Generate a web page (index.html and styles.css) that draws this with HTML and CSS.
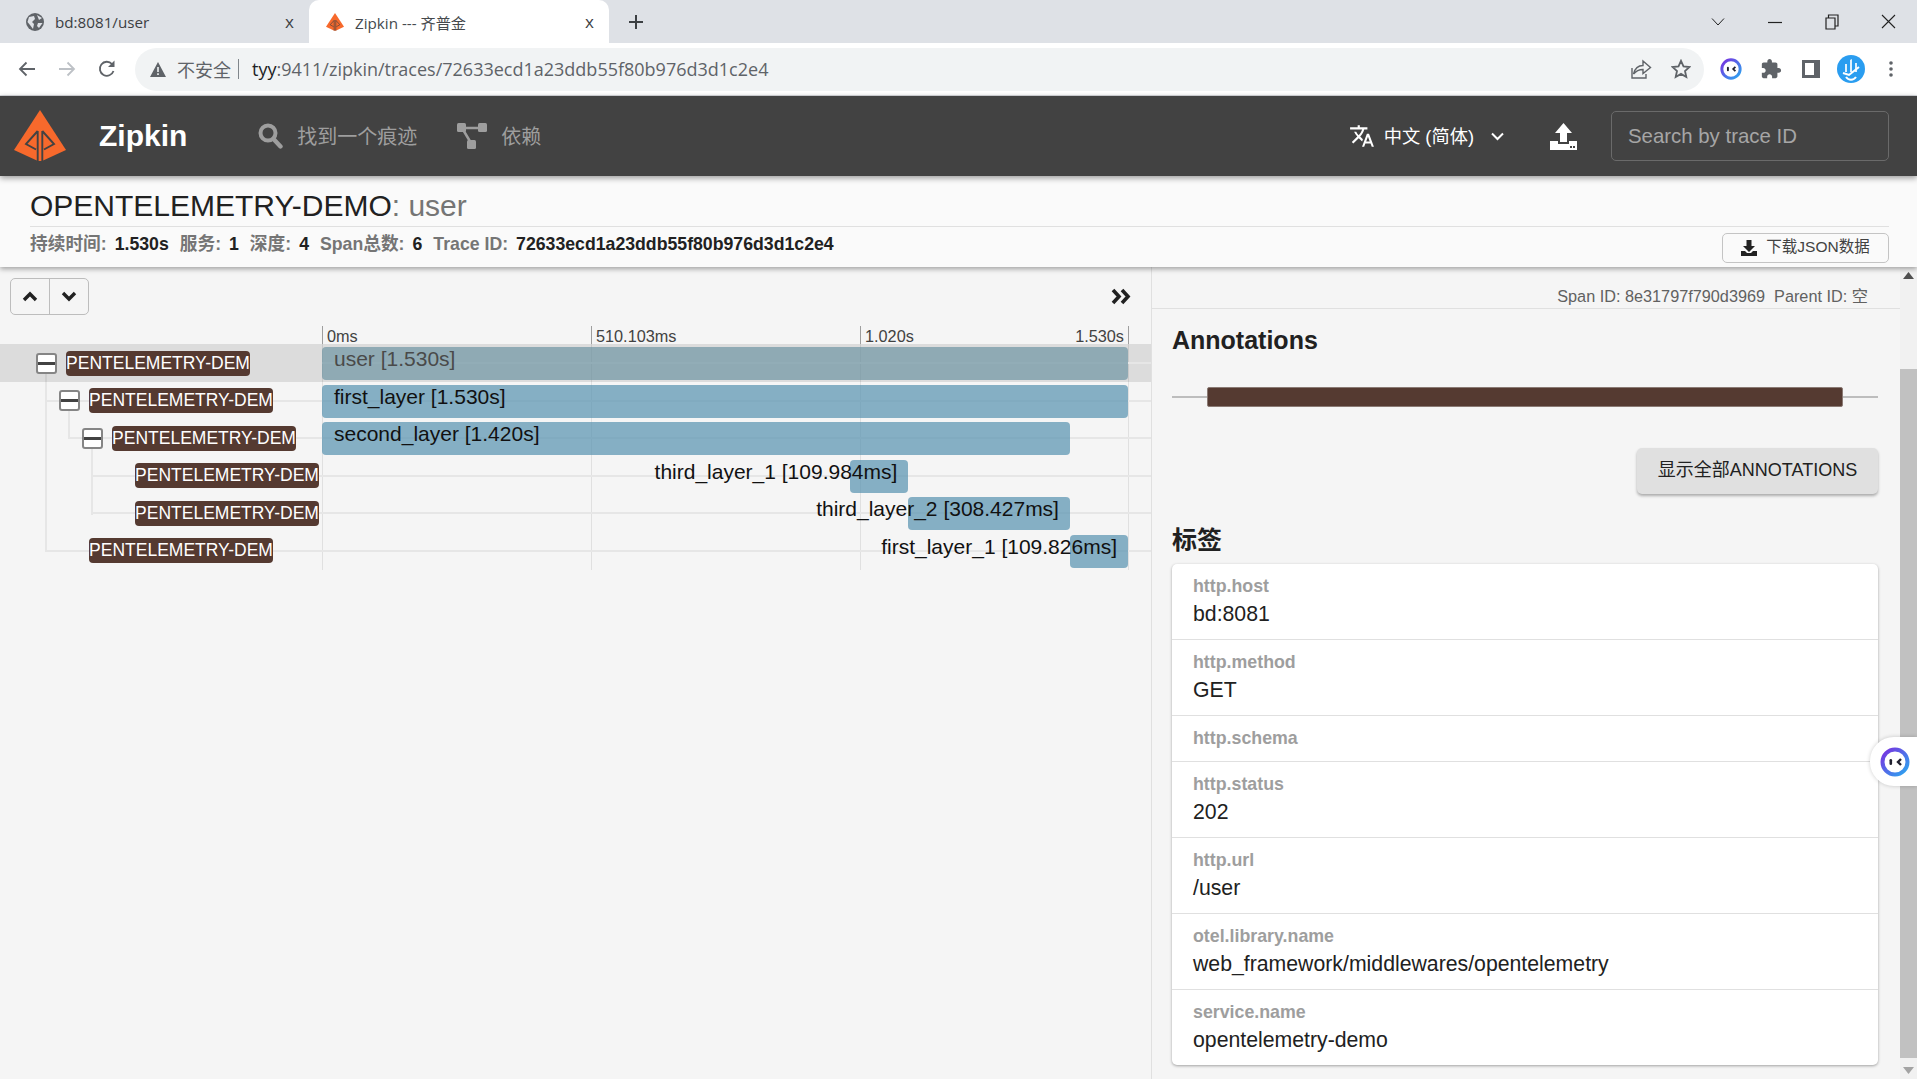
FILE: index.html
```html
<!DOCTYPE html>
<html lang="en">
<head>
    <meta charset="UTF-8">
    <title>Zipkin --- 齐普金</title>
    <link rel="stylesheet" href="styles.css">
</head>
<body>
<svg class="defs" aria-hidden="true">
    <symbol id="zipkinLogo" viewBox="0 0 52 52">
        <path d="M26 0 L52 40 L28 51 L24 51 L0 40 Z" fill="#f7692c"/>
        <path d="M23.7 21 L12 34 L22 39.5 M28.3 21 L40 34 L30 39.5 M23.7 21 V51 M28.3 21 V51" fill="none" stroke="#424242" stroke-width="1.9"/>
    </symbol>
    <symbol id="eyeBadge" viewBox="0 0 30 30">
        <defs>
            <linearGradient id="ringColor" x1="0" y1="0" x2="1" y2="1">
                <stop offset="0" stop-color="#7a2fe0"/>
                <stop offset="1" stop-color="#2aa8f0"/>
            </linearGradient>
        </defs>
        <circle cx="15" cy="15" r="12.5" fill="#fff" stroke="url(#ringColor)" stroke-width="4"/>
        <rect x="9.5" y="12" width="2.6" height="6" rx="1.3" fill="#1f1f2e"/>
        <path d="M21 12 L18 15 L21 18" fill="none" stroke="#1f1f2e" stroke-width="2.4"/>
    </symbol>
</svg>

<div class="tabstrip">
    <div class="tab">
        <svg class="favicon" viewBox="0 0 18 18">
            <circle cx="9" cy="9" r="9" fill="#5f6368"/>
            <path d="M3 4 L8 3 L9 6 L6 9 L8 11 L7 16 L4 12 L1.5 9 Z M11 2 L16 5 L13 7 Z M12 10 L16.5 10 L13 15 L11 13 Z" fill="#dee1e6"/>
        </svg>
        <span class="tab-title">bd:8081/user</span>
        <span class="tab-close">x</span>
    </div>
    <div class="tab active">
        <svg class="favicon"><use href="#zipkinLogo"/></svg>
        <span class="tab-title">Zipkin --- 齐普金</span>
        <span class="tab-close">x</span>
    </div>
    <svg class="new-tab" viewBox="0 0 16 16"><path d="M8 1 V15 M1 8 H15" stroke="#3c4043" stroke-width="2"/></svg>
    <div class="spacer"></div>
    <div class="win-btn"><svg width="14" height="10" viewBox="0 0 14 10"><path d="M1 1.5 L7 8 L13 1.5" fill="none" stroke="#222" stroke-width="1"/></svg></div>
    <div class="win-btn"><svg width="14" height="14" viewBox="0 0 14 14"><path d="M0 7.5 H14" stroke="#222" stroke-width="1.2"/></svg></div>
    <div class="win-btn"><svg width="14" height="16" viewBox="0 0 14 16"><path d="M1 4 H10 V15 H1 Z M3.5 4 V1 H13 V12 H10" fill="none" stroke="#222" stroke-width="1.2"/></svg></div>
    <div class="win-btn"><svg width="15" height="15" viewBox="0 0 15 15"><path d="M1 1 L14 14 M14 1 L1 14" stroke="#222" stroke-width="1.1"/></svg></div>
</div>

<div class="toolbar">
    <div class="tool-btn"><svg width="20" height="20" viewBox="0 0 20 20"><path d="M18 10 H3 M9.5 3.5 L3 10 L9.5 16.5" fill="none" stroke="#5f6368" stroke-width="1.8"/></svg></div>
    <div class="tool-btn"><svg width="20" height="20" viewBox="0 0 20 20"><path d="M2 10 H17 M10.5 3.5 L17 10 L10.5 16.5" fill="none" stroke="#bdc1c6" stroke-width="1.8"/></svg></div>
    <div class="tool-btn"><svg width="20" height="20" viewBox="0 0 20 20"><path d="M16.5 12 A7 7 0 1 1 15 5" fill="none" stroke="#5f6368" stroke-width="1.8"/><path d="M17.5 1.5 V8 H11 Z" fill="#5f6368"/></svg></div>
    <div class="omnibox">
        <svg class="warn" width="16" height="15" viewBox="0 0 16 15"><path d="M8 0 L16 15 H0 Z" fill="#5f6368"/><path d="M8 5 V10 M8 11.2 V13" stroke="#f1f3f4" stroke-width="1.6"/></svg>
        <span class="insecure">不安全</span>
        <span class="omni-sep"></span>
        <span class="url"><span class="url-host">tyy</span>:9411/zipkin/traces/72633ecd1a23ddb55f80b976d3d1c2e4</span>
        <div class="spacer"></div>
        <div class="tool-btn"><svg width="22" height="22" viewBox="0 0 22 22"><path d="M2 10 V20 H16 V16 M3.5 16 C5 10 9 7.5 13 7.5 V3 L20.5 9.5 L13 15.5 V11.5 C9 11.5 6 13 3.5 16 Z" fill="none" stroke="#5f6368" stroke-width="1.4"/></svg></div>
        <div class="tool-btn"><svg width="20" height="20" viewBox="0 0 20 20"><path d="M10 1.8 L12.5 7.4 L18.5 8 L14 12 L15.3 18 L10 14.9 L4.7 18 L6 12 L1.5 8 L7.5 7.4 Z" fill="none" stroke="#5f6368" stroke-width="1.8"/></svg></div>
    </div>
    <div class="tool-btn"><svg width="22" height="22"><use href="#eyeBadge"/></svg></div>
    <div class="tool-btn"><svg width="22" height="22" viewBox="0 0 24 24"><path fill="#5f6368" d="M20.5 11H19V7c0-1.1-.9-2-2-2h-4V3.5C13 2.12 11.88 1 10.5 1S8 2.12 8 3.5V5H4c-1.1 0-1.99.9-1.99 2v3.8H3.5c1.49 0 2.7 1.21 2.7 2.7s-1.21 2.7-2.7 2.7H2V20c0 1.1.9 2 2 2h3.8v-1.5c0-1.49 1.21-2.7 2.7-2.7 1.49 0 2.7 1.21 2.7 2.7V22H17c1.1 0 2-.9 2-2v-4h1.5c1.38 0 2.5-1.12 2.5-2.5S21.88 11 20.5 11z"/></svg></div>
    <div class="tool-btn"><svg width="18" height="18" viewBox="0 0 18 18"><path d="M0 0 H18 V18 H0 Z" fill="#5f6368"/><rect x="3" y="3" width="9" height="12" fill="#fff"/></svg></div>
    <div class="tool-btn"><svg width="28" height="28" viewBox="0 0 28 28"><circle cx="14" cy="14" r="14" fill="#2a9df0"/><path d="M8 9 L10 9 L10 17 L8 17 Z M13 5 L15 4 L15 17 L13 17 Z M18 8 L20 8 L20 17 L18 17 Z" fill="#fff" opacity=".85"/><path d="M6 18 L12 20 L22 12 M9 22 A6 6 0 0 0 19 22" fill="none" stroke="#fff" stroke-width="2"/></svg></div>
    <div class="tool-btn"><svg width="4" height="16" viewBox="0 0 4 16"><circle cx="2" cy="2" r="1.8" fill="#5f6368"/><circle cx="2" cy="8" r="1.8" fill="#5f6368"/><circle cx="2" cy="14" r="1.8" fill="#5f6368"/></svg></div>
</div>

<div class="app-header">
    <svg class="logo"><use href="#zipkinLogo"/></svg>
    <div class="brand">Zipkin</div>
    <div class="nav-item find">
        <svg width="25" height="26" viewBox="0 0 25 26"><circle cx="10" cy="10" r="7.5" fill="none" stroke="#9e9e9e" stroke-width="4"/><path d="M15.5 16 L22.5 23.5" stroke="#9e9e9e" stroke-width="4.4" stroke-linecap="round"/></svg>
        <span>找到一个痕迹</span>
    </div>
    <div class="nav-item deps">
        <svg width="30" height="26" viewBox="0 0 30 26"><rect x="0" y="0" width="9" height="9" rx="1.5" fill="#9e9e9e"/><rect x="21" y="0" width="9" height="9" rx="1.5" fill="#9e9e9e"/><rect x="10" y="17" width="9" height="9" rx="1.5" fill="#9e9e9e"/><path d="M5 5 H25 M5 5 L14 20" stroke="#9e9e9e" stroke-width="2.5"/></svg>
        <span>依赖</span>
    </div>
    <div class="spacer"></div>
    <div class="lang">
        <svg width="26" height="26" viewBox="0 0 24 24"><path fill="#fff" d="M12.87 15.07l-2.54-2.51.03-.03c1.74-1.94 2.98-4.17 3.71-6.53H17V4h-7V2H8v2H1v1.99h11.17C11.5 7.92 10.44 9.75 9 11.35 8.07 10.32 7.3 9.19 6.69 8h-2c.73 1.63 1.73 3.17 2.98 4.56l-5.09 5.02L4 19l5-5 3.11 3.11.76-2.04zM18.5 10h-2L12 22h2l1.12-3h4.75L21 22h2l-4.5-12zm-2.62 7l1.62-4.33L19.12 17h-3.24z"/></svg>
        <span>中文 (简体)</span>
        <svg width="13" height="9" viewBox="0 0 13 9"><path d="M1 1.5 L6.5 7 L12 1.5" fill="none" stroke="#fff" stroke-width="2"/></svg>
    </div>
    <svg class="upload" width="27" height="27" viewBox="0 0 27 27"><path d="M13.5 0 L22 10 H17 V19 H10 V10 H5 Z" fill="#fff"/><path d="M0 18 H8 V21 H19 V18 H27 V27 H0 Z" fill="#fff"/><rect x="20" y="23" width="2" height="2" fill="#424242"/><rect x="23" y="23" width="2" height="2" fill="#424242"/></svg>
    <div class="trace-search">Search by trace ID</div>
</div>

<div class="trace-head">
    <div class="trace-title">OPENTELEMETRY-DEMO<span class="trace-title-span">: user</span></div>
    <div class="trace-meta">
        <div class="meta-items">
            <span class="meta-label">持续时间:</span><span class="meta-value">1.530s</span>
            <span class="meta-label">服务:</span><span class="meta-value">1</span>
            <span class="meta-label">深度:</span><span class="meta-value">4</span>
            <span class="meta-label">Span总数:</span><span class="meta-value">6</span>
            <span class="meta-label">Trace ID:</span><span class="meta-value">72633ecd1a23ddb55f80b976d3d1c2e4</span>
        </div>
        <div class="json-btn">
            <svg width="16" height="16" viewBox="0 0 16 16"><path d="M5.5 0 H10.5 V6 H14 L8 12 L2 6 H5.5 Z" fill="#222"/><path d="M0 11 H4 L6 13 H10 L12 11 H16 V16 H0 Z" fill="#222"/></svg>
            <span>下载JSON数据</span>
        </div>
    </div>
</div>

<div class="main">
    <div class="trace-panel">
        <div class="panel-top">
            <div class="btn-group">
                <div class="group-btn"><svg width="16" height="11" viewBox="0 0 16 11"><path d="M2 9 L8 3 L14 9" fill="none" stroke="#212121" stroke-width="3.4"/></svg></div>
                <div class="group-btn"><svg width="16" height="11" viewBox="0 0 16 11"><path d="M2 2 L8 8 L14 2" fill="none" stroke="#212121" stroke-width="3.4"/></svg></div>
            </div>
            <svg class="collapse" width="20" height="17" viewBox="0 0 20 17"><path d="M2 2 L8 8.5 L2 15 M11 2 L17 8.5 L11 15" fill="none" stroke="#212121" stroke-width="3.6"/></svg>
        </div>
        <div class="ruler">
            <div class="tick">0ms</div>
            <div class="tick">510.103ms</div>
            <div class="tick tick-last"><span>1.020s</span><span>1.530s</span></div>
        </div>
        <div class="rows">
            <div class="grid"><div></div><div></div><div class="grid-last"></div></div>
            <span class="tree-v tree-a"></span>
            <span class="tree-v tree-b"></span>
            <span class="tree-v tree-c"></span>

            <div class="row selected">
                <div class="tree-cell lv0"><span class="toggle"></span><span class="service"><span>OPENTELEMETRY-DEMO</span></span></div>
                <div class="timeline"><div class="bar" style="left: 0; width: 100%">user [1.530s]</div></div>
            </div>
            <div class="row line-a">
                <div class="tree-cell lv1"><span class="toggle"></span><span class="service"><span>OPENTELEMETRY-DEMO</span></span></div>
                <div class="timeline"><div class="bar" style="left: 0; width: 100%">first_layer [1.530s]</div></div>
            </div>
            <div class="row line-b">
                <div class="tree-cell lv2"><span class="toggle"></span><span class="service"><span>OPENTELEMETRY-DEMO</span></span></div>
                <div class="timeline"><div class="bar" style="left: 0; width: 92.8%">second_layer [1.420s]</div></div>
            </div>
            <div class="row line-c">
                <div class="tree-cell lv3"><span class="toggle hidden"></span><span class="service"><span>OPENTELEMETRY-DEMO</span></span></div>
                <div class="timeline"><div class="bar short" style="left: 65.55%; width: 7.2%">third_layer_1 [109.984ms]</div></div>
            </div>
            <div class="row line-c">
                <div class="tree-cell lv3"><span class="toggle hidden"></span><span class="service"><span>OPENTELEMETRY-DEMO</span></span></div>
                <div class="timeline"><div class="bar short" style="left: 72.7%; width: 20.1%">third_layer_2 [308.427ms]</div></div>
            </div>
            <div class="row line-a">
                <div class="tree-cell lv1"><span class="toggle hidden"></span><span class="service"><span>OPENTELEMETRY-DEMO</span></span></div>
                <div class="timeline"><div class="bar short" style="left: 92.8%; width: 7.2%">first_layer_1 [109.826ms]</div></div>
            </div>
        </div>
    </div>

    <div class="span-panel">
        <div class="span-ids">Span ID: 8e31797f790d3969&nbsp;&nbsp;Parent ID: 空</div>
        <div class="span-body">
            <div class="section-title">Annotations</div>
            <div class="anno-track"><div class="anno-bar"></div></div>
            <div class="anno-actions"><div class="anno-btn"><span>显示全部ANNOTATIONS</span></div></div>
            <div class="section-title tags-title">标签</div>
            <div class="tag-card">
                <div class="tag"><div class="tag-key">http.host</div><div class="tag-value">bd:8081</div></div>
                <div class="tag"><div class="tag-key">http.method</div><div class="tag-value">GET</div></div>
                <div class="tag"><div class="tag-key">http.schema</div></div>
                <div class="tag"><div class="tag-key">http.status</div><div class="tag-value">202</div></div>
                <div class="tag"><div class="tag-key">http.url</div><div class="tag-value">/user</div></div>
                <div class="tag"><div class="tag-key">otel.library.name</div><div class="tag-value">web_framework/middlewares/opentelemetry</div></div>
                <div class="tag"><div class="tag-key">service.name</div><div class="tag-value">opentelemetry-demo</div></div>
            </div>
        </div>
    </div>

    <div class="scrollbar">
        <div class="scroll-arrow"><svg width="11" height="7" viewBox="0 0 11 7"><path d="M5.5 0 L11 7 H0 Z" fill="#505050"/></svg></div>
        <div class="scroll-gap"></div>
        <div class="scroll-thumb"></div>
        <div class="spacer"></div>
        <div class="scroll-arrow"><svg width="11" height="7" viewBox="0 0 11 7"><path d="M0 0 H11 L5.5 7 Z" fill="#a3a3a3"/></svg></div>
    </div>
</div>

<div class="float-widget"><svg width="30" height="30"><use href="#eyeBadge"/></svg></div>
</body>
</html>
```

FILE: styles.css
```css
* {
    box-sizing: border-box;
}

html, body {
    margin: 0;
    width: 1917px;
    height: 1079px;
    overflow: hidden;
}

body {
    display: flex;
    flex-direction: column;
    background-color: #f5f5f5;
    color: #212121;
    font-family: "Liberation Sans", "Noto Sans CJK SC", sans-serif;
}

.defs {
    width: 0;
    height: 0;
    display: block;
}

.spacer {
    flex: 1;
}

/* browser chrome */
.tabstrip {
    height: 43px;
    flex: none;
    display: flex;
    align-items: center;
    padding-left: 9px;
    background-color: #dee1e6;
}

.tab {
    width: 300px;
    height: 43px;
    display: flex;
    align-items: center;
    padding: 0 15px 0 17px;
    color: #3c4043;
    font-family: "Open Sans", "Noto Sans CJK SC", sans-serif;
    font-size: 15.2px;
}

.tab.active {
    background-color: #fff;
    border-radius: 10px 10px 0 0;
    color: #45494d;
}

.favicon {
    width: 18px;
    height: 18px;
    margin-right: 11px;
    flex: none;
}

.tab-title {
    flex: 1;
    white-space: nowrap;
}

.tab-close {
    font-size: 17px;
    color: #3c4043;
}

.new-tab {
    width: 16px;
    height: 16px;
    margin-left: 19px;
}

.win-btn {
    width: 57px;
    height: 43px;
    display: flex;
    align-items: center;
    justify-content: center;
}

.toolbar {
    height: 53px;
    flex: none;
    display: flex;
    align-items: center;
    padding: 5px 6px 5px 7px;
    background-color: #fff;
    border-bottom: 1px solid #dadce0;
}

.tool-btn {
    width: 40px;
    height: 40px;
    flex: none;
    display: flex;
    align-items: center;
    justify-content: center;
}

.omnibox {
    flex: 1;
    height: 43px;
    margin: 0 7px 0 8px;
    padding: 0 3px 0 15px;
    display: flex;
    align-items: center;
    border-radius: 22px;
    background-color: #f1f3f4;
    font-family: "Open Sans", "Noto Sans CJK SC", sans-serif;
    color: #5f6368;
}

.insecure {
    margin-left: 11px;
    font-size: 18px;
}

.omni-sep {
    width: 1px;
    height: 20px;
    margin: 0 13px 0 7px;
    background-color: #80868b;
}

.url {
    font-size: 18px;
    white-space: nowrap;
}

.url-host {
    color: #202124;
}

/* zipkin header */
.app-header {
    height: 80px;
    flex: none;
    position: relative;
    z-index: 3;
    display: flex;
    align-items: center;
    padding: 0 28px 0 14px;
    background-color: #424242;
    box-shadow: 0 2px 6px rgba(0, 0, 0, .4);
}

.logo {
    width: 52px;
    height: 52px;
    flex: none;
}

.brand {
    margin-left: 33px;
    color: #fff;
    font-size: 30px;
    font-weight: bold;
}

.nav-item {
    display: flex;
    align-items: center;
    color: #9e9e9e;
    font-size: 20px;
}

.nav-item span {
    margin-left: 14px;
    padding-bottom: 2px;
}

.find {
    margin-left: 71px;
}

.deps {
    margin-left: 40px;
}

.lang {
    display: flex;
    align-items: center;
    color: #fff;
    font-size: 18.25px;
}

.lang span {
    margin: 0 17px 0 9px;
    padding-bottom: 2px;
}

.upload {
    margin-left: 46px;
}

.trace-search {
    width: 278px;
    height: 50px;
    margin-left: 34px;
    padding-left: 16px;
    display: flex;
    align-items: center;
    border: 1px solid #6a6a6a;
    border-radius: 5px;
    color: #a6a6a6;
    font-size: 20.4px;
}

/* trace title */
.trace-head {
    height: 91px;
    flex: none;
    position: relative;
    z-index: 2;
    padding: 0 28px 0 30px;
    background-color: #fafafa;
    box-shadow: 0 2px 5px rgba(0, 0, 0, .35);
}

.trace-title {
    height: 51px;
    padding-top: 12px;
    border-bottom: 1px solid #e0e0e0;
    font-size: 30px;
    line-height: 36px;
}

.trace-title-span {
    color: #757575;
}

.trace-meta {
    height: 40px;
    display: flex;
    align-items: center;
    justify-content: space-between;
}

.meta-items {
    display: flex;
    align-items: baseline;
    padding-bottom: 6px;
    font-size: 17.7px;
    line-height: 24px;
    font-weight: bold;
}

.meta-label {
    color: #757575;
}

.meta-value {
    margin: 0 11px 0 8px;
    color: #212121;
}

.json-btn {
    width: 167px;
    height: 30px;
    margin-top: 1px;
    display: flex;
    align-items: center;
    justify-content: center;
    gap: 9px;
    border: 1px solid #c4c4c4;
    border-radius: 5px;
    color: #424242;
    font-size: 15.5px;
}

.json-btn span {
    padding-bottom: 6px;
}

/* main split */
.main {
    flex: 1;
    display: flex;
    min-height: 0;
}

.trace-panel {
    width: 1152px;
    flex: none;
    border-right: 1px solid #e0e0e0;
}

.panel-top {
    height: 59px;
    padding: 0 20px 0 10px;
    display: flex;
    align-items: center;
    justify-content: space-between;
}

.btn-group {
    width: 79px;
    height: 37px;
    margin-top: -1px;
    display: flex;
    border: 1px solid #bdbdbd;
    border-radius: 5px;
}

.group-btn {
    flex: 1;
    display: flex;
    align-items: center;
    justify-content: center;
}

.group-btn + .group-btn {
    border-left: 1px solid #bdbdbd;
}

.ruler {
    height: 18px;
    margin-left: 322px;
    width: 807px;
    display: flex;
    color: #424242;
    font-size: 16.25px;
    line-height: 20px;
}

.tick {
    width: 269px;
    padding: 0 4px;
    border-left: 1px solid #9e9e9e;
    white-space: nowrap;
}

.tick-last {
    display: flex;
    justify-content: space-between;
    border-right: 1px solid #9e9e9e;
}

.rows {
    position: relative;
    height: 226px;
}

.grid {
    position: absolute;
    top: 0;
    bottom: 0;
    left: 322px;
    width: 807px;
    display: flex;
}

.grid div {
    width: 269px;
    border-left: 1px solid #e0e0e0;
}

.grid .grid-last {
    border-right: 1px solid #e0e0e0;
}

.tree-v {
    position: absolute;
    width: 2px;
    background-color: #e6e6e6;
}

.tree-a {
    left: 45px;
    top: 30px;
    height: 178px;
}

.tree-b {
    left: 68px;
    top: 67px;
    height: 28px;
}

.tree-c {
    left: 91px;
    top: 105px;
    height: 66px;
}

.row {
    height: 37.5px;
    position: relative;
    display: flex;
}

.row.selected {
    background-color: rgba(0, 0, 0, .1);
}

/* the connector line behind each row */
.row::before {
    content: "";
    position: absolute;
    left: 322px;
    right: 0;
    top: 18px;
    height: 2px;
    background-color: #e6e6e6;
}

.row.line-a::before {
    left: 45px;
}

.row.line-b::before {
    left: 68px;
}

.row.line-c::before {
    left: 91px;
}

.tree-cell {
    width: 322px;
    flex: none;
    position: relative;
    display: flex;
    align-items: center;
    padding-top: 1px;
}

.lv0 {
    padding-left: 36px;
}

.lv1 {
    padding-left: 59px;
}

.lv2 {
    padding-left: 82px;
}

.lv3 {
    padding-left: 105px;
}

.toggle {
    width: 21px;
    height: 21px;
    margin-right: 9px;
    flex: none;
    display: flex;
    align-items: center;
    border: 2px solid #858585;
    border-radius: 3px;
    background-color: #fff;
}

.toggle::before {
    content: "";
    width: 100%;
    height: 3px;
    background-color: #424242;
}

.toggle.hidden {
    visibility: hidden;
}

.service {
    width: 184px;
    height: 25px;
    display: flex;
    align-items: center;
    justify-content: center;
    overflow: hidden;
    border-radius: 4px;
    background-color: #553a31;
    color: #fff;
    font-size: 17.5px;
    white-space: nowrap;
}

.timeline {
    width: 806px;
    flex: none;
    position: relative;
}

.bar {
    position: absolute;
    top: 3px;
    height: 33px;
    padding-left: 12px;
    display: flex;
    border-radius: 4px;
    background-color: rgba(85, 145, 175, .7);
    color: #111;
    font-size: 21px;
    line-height: 24px;
    white-space: nowrap;
}

.bar.short {
    padding: 0 11px 0 0;
    justify-content: flex-end;
}

.selected .bar {
    background-color: rgba(110, 148, 163, .7);
    color: #4a4a4a;
}

/* span details */
.span-panel {
    flex: 1;
    min-width: 0;
}

.span-ids {
    height: 42px;
    padding: 19px 32px 0 0;
    border-bottom: 1px solid #e0e0e0;
    color: #616161;
    font-size: 16.25px;
    line-height: 20px;
    text-align: right;
}

.span-body {
    padding: 0 22px 0 20px;
}

.section-title {
    margin-top: 16px;
    font-size: 25px;
    font-weight: bold;
    line-height: 30px;
}

.anno-track {
    position: relative;
    height: 20px;
    margin-top: 32px;
    padding: 0 35px;
}

.anno-track::before {
    content: "";
    position: absolute;
    left: 0;
    right: 0;
    top: 9px;
    height: 2px;
    background-color: #bdbdbd;
}

.anno-bar {
    position: relative;
    height: 20px;
    border: 1px solid #8a7a74;
    border-radius: 2px;
    background-color: #553a31;
}

.anno-actions {
    margin-top: 41px;
    display: flex;
    justify-content: flex-end;
}

.anno-btn {
    width: 241px;
    height: 46px;
    display: flex;
    align-items: center;
    justify-content: center;
    border-radius: 5px;
    background-color: #e0e0e0;
    box-shadow: 0 2px 3px rgba(0, 0, 0, .3);
    font-size: 18px;
}

.anno-btn span {
    padding-bottom: 6px;
}

.tags-title {
    margin-top: 31px;
}

.tag-card {
    margin-top: 9px;
    border-radius: 5px;
    background-color: #fff;
    box-shadow: 0 1px 3px rgba(0, 0, 0, .35);
}

.tag {
    padding: 10px 21px;
    border-bottom: 1px solid #e0e0e0;
}

.tag:last-child {
    border-bottom: none;
}

.tag-key {
    color: #9e9e9e;
    font-size: 17.8px;
    font-weight: bold;
    line-height: 25px;
}

.tag-value {
    font-size: 21.25px;
    line-height: 30px;
}

.scrollbar {
    width: 17px;
    flex: none;
    display: flex;
    flex-direction: column;
    background-color: #f1f1f1;
}

.scroll-arrow {
    height: 17px;
    flex: none;
    display: flex;
    align-items: center;
    justify-content: center;
}

.scroll-gap {
    height: 85px;
    flex: none;
}

.scroll-thumb {
    height: 689px;
    flex: none;
    background-color: #c1c1c1;
}

/* extension button floating over the page edge */
.float-widget {
    position: fixed;
    left: 1870px;
    top: 737px;
    width: 47px;
    height: 49px;
    padding-left: 10px;
    display: flex;
    align-items: center;
    border-radius: 24px 0 0 24px;
    background-color: #fff;
    box-shadow: 0 0 4px rgba(0, 0, 0, .2);
}
```
